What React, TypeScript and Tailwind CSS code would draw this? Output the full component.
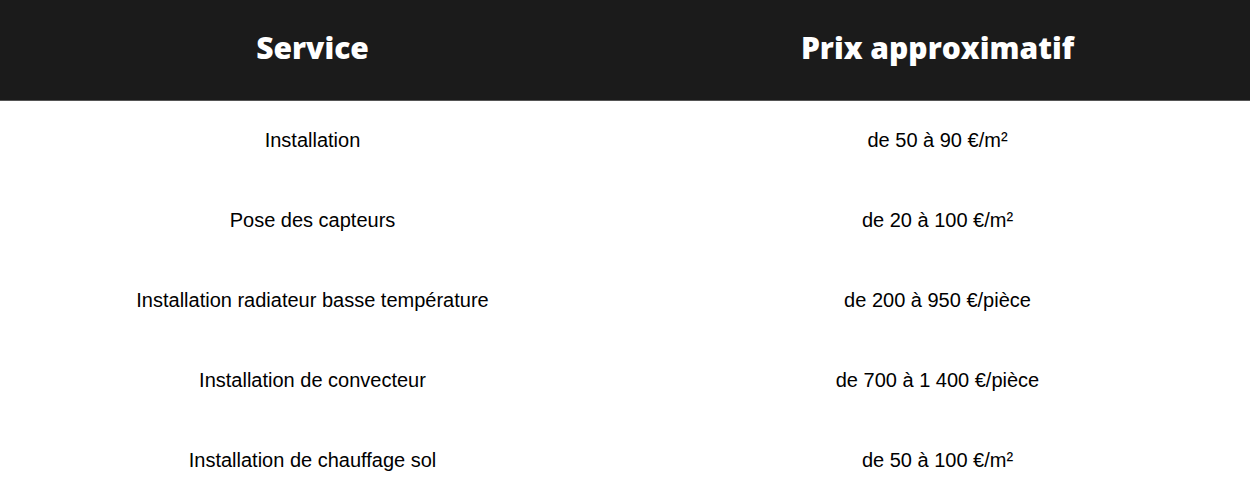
const rows = [
  ['Installation', 'de 50 à 90 €/m²'],
  ['Pose des capteurs', 'de 20 à 100 €/m²'],
  ['Installation radiateur basse température', 'de 200 à 950 €/pièce'],
  ['Installation de convecteur', 'de 700 à 1 400 €/pièce'],
  ['Installation de chauffage sol', 'de 50 à 100 €/m²'],
]

export default function App() {
  return (
    <div className="w-[1250px] h-[500px] bg-white overflow-hidden">
      <table className="w-full border-collapse table-fixed">
        <thead>
          <tr className="h-[100px] bg-[#1b1b1b] border-b border-[#555555]">
            <th className="text-white text-[30px] font-extrabold font-['Open_Sans',sans-serif] pb-1">Service</th>
            <th className="text-white text-[30px] font-extrabold font-['Open_Sans',sans-serif] pb-1">Prix approximatif</th>
          </tr>
        </thead>
        <tbody>
          {rows.map(([service, prix]) => (
            <tr key={service} className="h-[80px]">
              <td className="text-center text-[20px] text-black font-['Liberation_Sans',Arial,sans-serif]">{service}</td>
              <td className="text-center text-[20px] text-black font-['Liberation_Sans',Arial,sans-serif]">{prix}</td>
            </tr>
          ))}
        </tbody>
      </table>
    </div>
  )
}
